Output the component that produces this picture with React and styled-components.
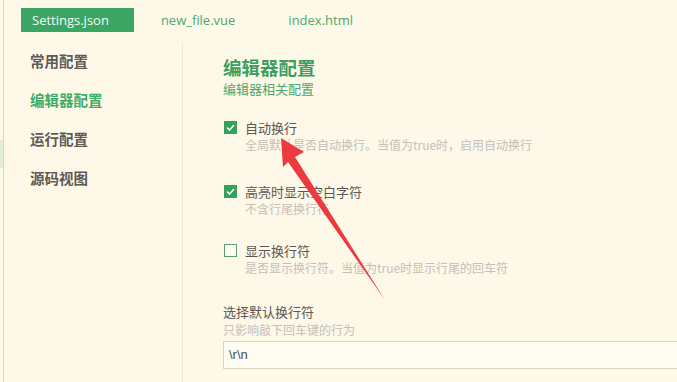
import React, { useState } from 'react';
import styled, { createGlobalStyle } from 'styled-components';

const GlobalStyle = createGlobalStyle`
  html, body {
    margin: 0;
    padding: 0;
    background: #fef8e9;
  }
  body {
    font-family: "Noto Sans CJK SC", "Open Sans", sans-serif;
  }
`;

const Page = styled.div`
  position: relative;
  width: 677px;
  height: 382px;
  display: flex;
  background: #fef8e9;
  overflow: hidden;
`;

const Gutter = styled.div`
  width: 3px;
  display: flex;
  flex-direction: column;
  padding-top: 140px;
`;

const GutterMark = styled.div`
  height: 28px;
  background: #e3eed8;
`;

const Window = styled.div`
  flex: 1;
  display: flex;
  flex-direction: column;
  border-left: 1px solid #e2d3b4;
`;

const TabBar = styled.div`
  height: 42px;
  display: flex;
  align-items: flex-start;
  padding: 8px 0 0 17px;
  box-sizing: border-box;
`;

const Tab = styled.div`
  height: 24px;
  line-height: 24px;
  font-family: "Open Sans", "Noto Sans", sans-serif;
  font-size: 13px;
  padding: ${({ active }) => (active ? '0 25px 0 11px' : '0')};
  margin-right: ${({ gap }) => gap}px;
  background: ${({ active }) => (active ? '#3ba564' : 'transparent')};
  color: ${({ active }) => (active ? '#f4fbf2' : '#4aaa6c')};
`;

const Body = styled.div`
  flex: 1;
  display: flex;
`;

const Sidebar = styled.nav`
  width: 179px;
  border-right: 1px solid #f1e8d2;
  padding: 8px 0 0 26px;
  box-sizing: border-box;
  display: flex;
  flex-direction: column;
  gap: 17px;
`;

const NavItem = styled.div`
  font-size: 14.5px;
  font-weight: 700;
  line-height: 22px;
  color: ${({ active }) => (active ? '#3fac68' : '#5e5a55')};
`;

const Main = styled.main`
  flex: 1;
  padding: 14px 0 0 40px;
  display: flex;
  flex-direction: column;
`;

const Title = styled.h1`
  margin: 0;
  font-size: 18.5px;
  font-weight: 700;
  line-height: 22px;
  color: #3b9f60;
`;

const Subtitle = styled.div`
  font-size: 13px;
  line-height: 18px;
  color: #4aa86c;
  margin-top: 2px;
  margin-bottom: 20px;
`;

const Option = styled.div`
  display: flex;
  flex-direction: column;
  margin-bottom: ${({ gap }) => gap}px;
`;

const OptionRow = styled.label`
  display: flex;
  align-items: center;
  gap: 8px;
  height: 18px;
  cursor: pointer;
`;

const Box = styled.span`
  width: 13px;
  height: 13px;
  box-sizing: border-box;
  margin-left: 1px;
  display: flex;
  align-items: center;
  justify-content: center;
  background: ${({ checked }) => (checked ? '#35a05c' : '#fffcf3')};
  border: 1px solid ${({ checked }) => (checked ? '#35a05c' : '#5c9a70')};
`;

const OptionLabel = styled.span`
  font-size: 13px;
  color: #5b5753;
`;

const Desc = styled.div`
  font-size: 12px;
  line-height: 17px;
  color: #c4c0b8;
  padding-left: ${({ indent }) => indent}px;
`;

const FieldLabel = styled.div`
  font-size: 13px;
  line-height: 18px;
  color: #5b5753;
`;

const Input = styled.div`
  margin-top: 3px;
  height: 28px;
  box-sizing: border-box;
  border: 1px solid #d9d3c2;
  border-right: none;
  background: #fffcf1;
  font-family: "Liberation Sans", sans-serif;
  font-size: 13px;
  color: #4a4a4a;
  line-height: 26px;
  padding-left: 5px;
`;

const Arrow = styled.svg`
  position: absolute;
  left: 0;
  top: 0;
  pointer-events: none;
`;

const Check = () => (
  <svg width="9" height="7" viewBox="0 0 9 7">
    <path d="M1 3.5 L3.5 6 L8 1" fill="none" stroke="#fff" strokeWidth="1.5" />
  </svg>
);

const options = [
  { label: '自动换行', desc: '全局默认是否自动换行。当值为true时，启用自动换行', checked: true, gap: 29 },
  { label: '高亮时显示空白字符', desc: '不含行尾换行符', checked: true, gap: 24 },
  { label: '显示换行符', desc: '是否显示换行符。当值为true时显示行尾的回车符', checked: false, gap: 27 },
];

export default function App() {
  const [checked, setChecked] = useState(options.map((o) => o.checked));

  const toggle = (i) =>
    setChecked((prev) => prev.map((v, j) => (j === i ? !v : v)));

  return (
    <Page>
      <GlobalStyle />
      <Gutter>
        <GutterMark />
      </Gutter>
      <Window>
        <TabBar>
          <Tab active gap={27}>Settings.json</Tab>
          <Tab gap={53}>new_file.vue</Tab>
          <Tab>index.html</Tab>
        </TabBar>
        <Body>
          <Sidebar>
            <NavItem>常用配置</NavItem>
            <NavItem active>编辑器配置</NavItem>
            <NavItem>运行配置</NavItem>
            <NavItem>源码视图</NavItem>
          </Sidebar>
          <Main>
            <Title>编辑器配置</Title>
            <Subtitle>编辑器相关配置</Subtitle>
            {options.map((o, i) => (
              <Option key={o.label} gap={o.gap}>
                <OptionRow onClick={() => toggle(i)}>
                  <Box checked={checked[i]}>{checked[i] && <Check />}</Box>
                  <OptionLabel>{o.label}</OptionLabel>
                </OptionRow>
                <Desc indent={22}>{o.desc}</Desc>
              </Option>
            ))}
            <FieldLabel>选择默认换行符</FieldLabel>
            <Desc indent={0}>只影响敲下回车键的行为</Desc>
            <Input>\r\n</Input>
          </Main>
        </Body>
      </Window>
      <Arrow width="677" height="382" viewBox="0 0 677 382">
        <polygon
          points="281,138 304,152 295,157 385,300 288,162 283,167"
          fill="#ec3a3f"
        />
      </Arrow>
    </Page>
  );
}
